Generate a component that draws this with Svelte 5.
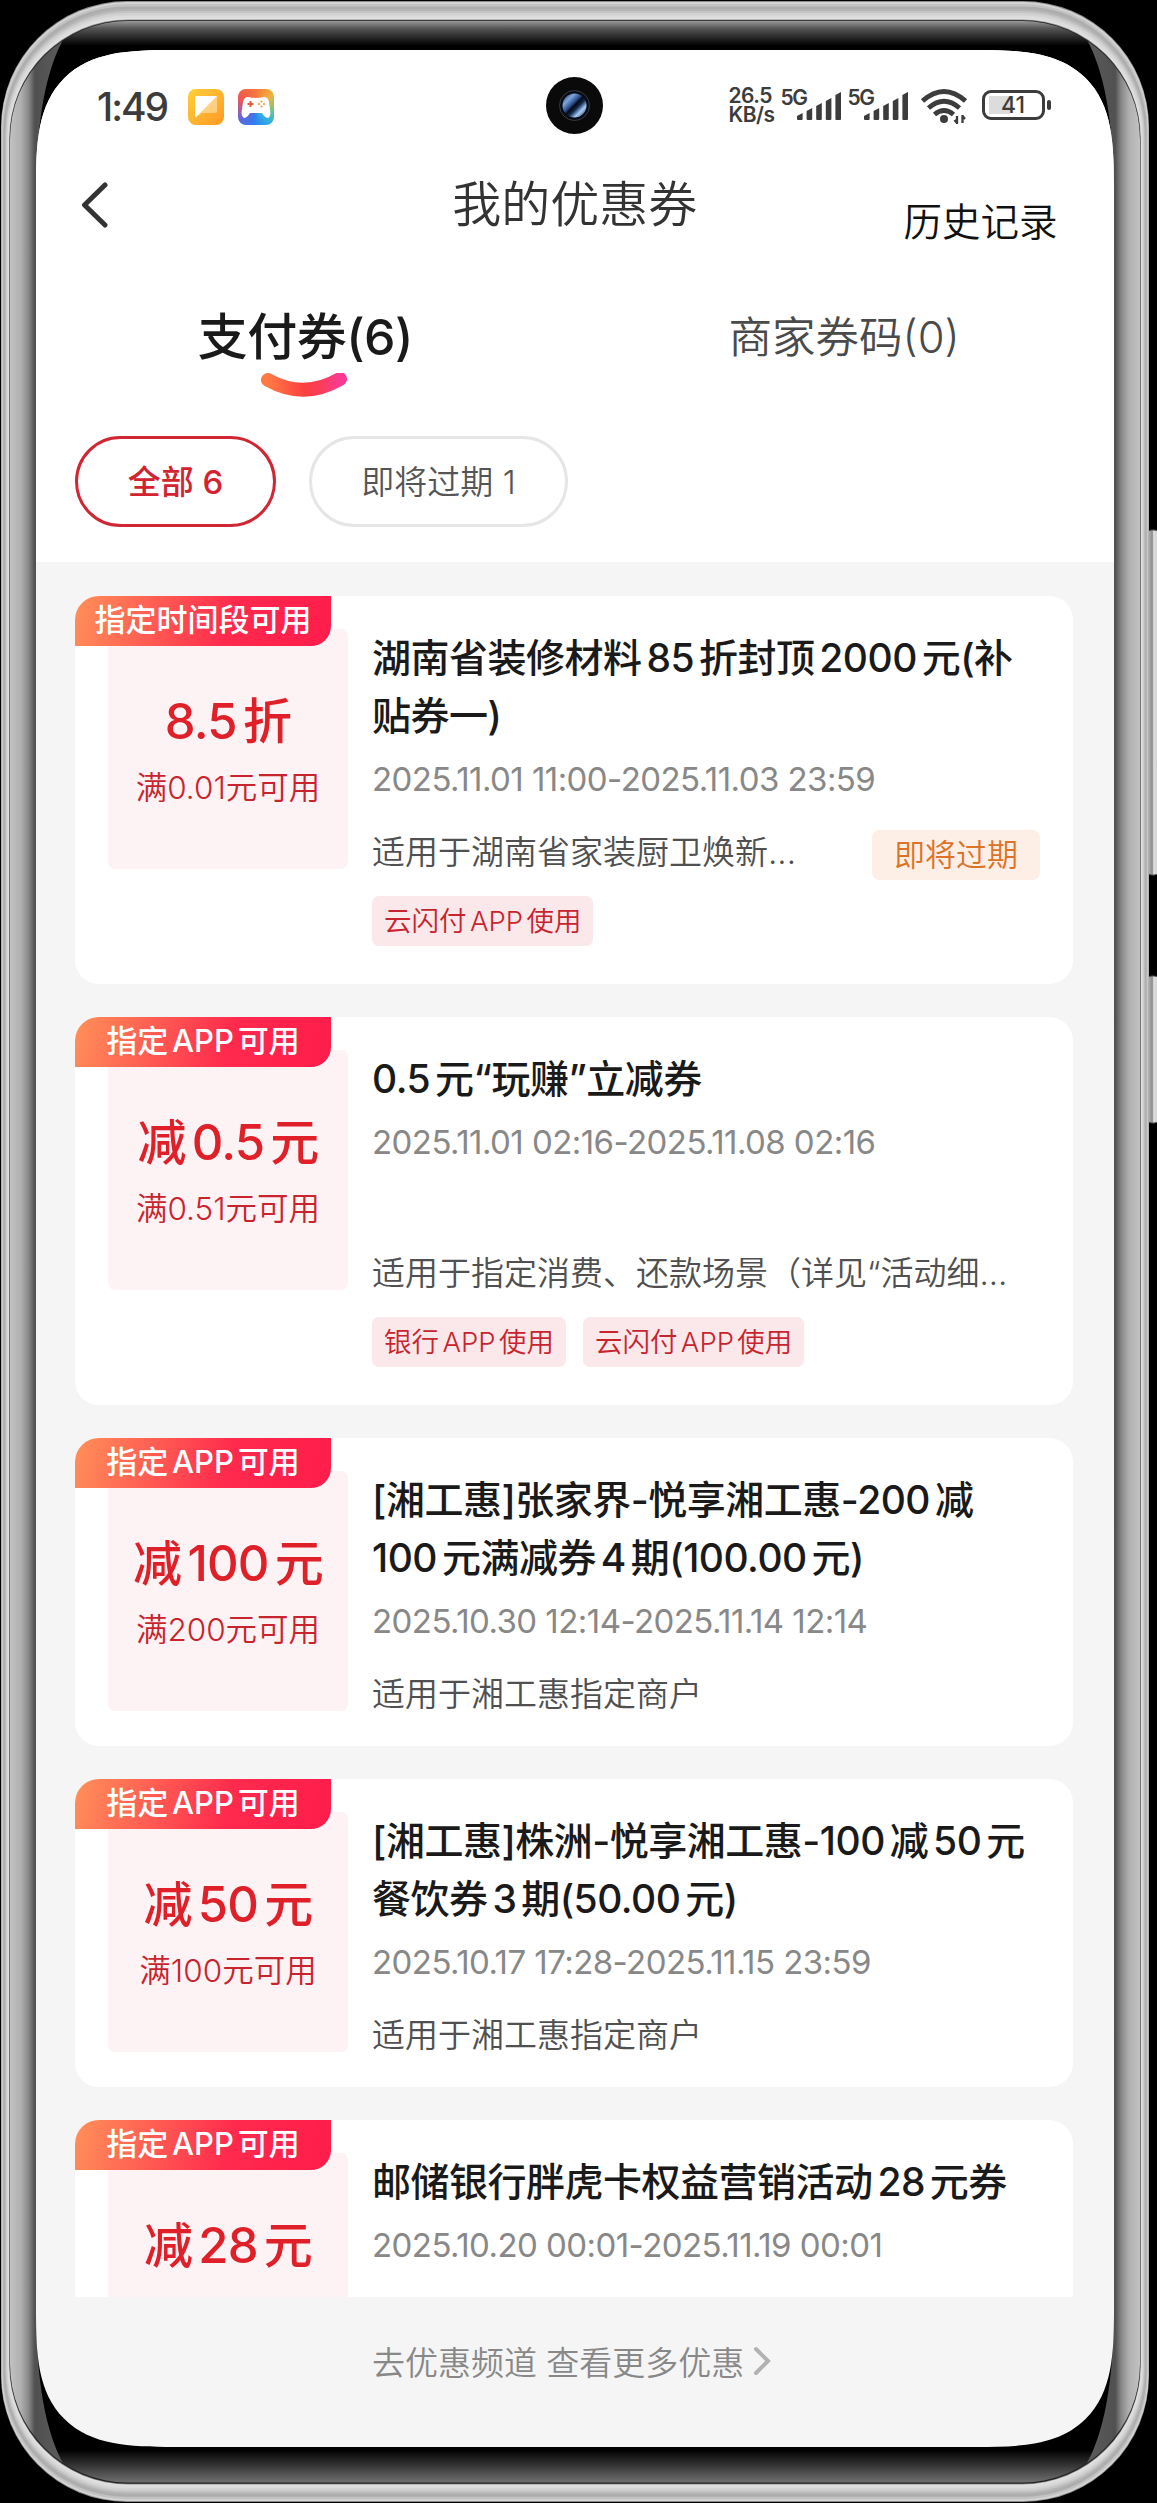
<script lang="ts">

	// Types

	interface Coupon {
		ribbon: string;
		amount: string;
		limit?: string;
		title: string[];
		date: string;
		scope?: string;
		expiring?: boolean;
		tags?: string[];
	}

	// Variables

	const coupons: Coupon[] = [
		{
			ribbon: "指定时间段可用",
			amount: "8.5折",
			limit: "满0.01元可用",
			title: ["湖南省装修材料85折封顶2000元(补", "贴券一)"],
			date: "2025.11.01 11:00-2025.11.03 23:59",
			scope: "适用于湖南省家装厨卫焕新...",
			expiring: true,
			tags: ["云闪付APP使用"]
		},
		{
			ribbon: "指定APP可用",
			amount: "减0.5元",
			limit: "满0.51元可用",
			title: ["0.5元“玩赚”立减券"],
			date: "2025.11.01 02:16-2025.11.08 02:16",
			scope: "适用于指定消费、还款场景（详见“活动细...",
			tags: ["银行APP使用", "云闪付APP使用"]
		},
		{
			ribbon: "指定APP可用",
			amount: "减100元",
			limit: "满200元可用",
			title: ["[湘工惠]张家界-悦享湘工惠-200减", "100元满减券4期(100.00元)"],
			date: "2025.10.30 12:14-2025.11.14 12:14",
			scope: "适用于湘工惠指定商户"
		},
		{
			ribbon: "指定APP可用",
			amount: "减50元",
			limit: "满100元可用",
			title: ["[湘工惠]株洲-悦享湘工惠-100减50元", "餐饮券3期(50.00元)"],
			date: "2025.10.17 17:28-2025.11.15 23:59",
			scope: "适用于湘工惠指定商户"
		},
		{
			ribbon: "指定APP可用",
			amount: "减28元",
			title: ["邮储银行胖虎卡权益营销活动28元券"],
			date: "2025.10.20 00:01-2025.11.19 00:01"
		}
	];

	// Metal rim, from the outer edge to the glass: position 0..1 and shade

	const rim: [number, string][] = [
		[0, "#8c8c8c"], [.05, "#d4d4d4"], [.15, "#c2c2c2"], [.27, "#adadad"],
		[.4, "#b4b4b4"], [.5, "#c4c4c4"], [.6, "#d2d2d2"], [.72, "#dcdcdc"],
		[.85, "#e2e2e2"], [.92, "#8a8a8a"], [.96, "#222"]
	];

	const signalBars: number[] = [7, 12, 17, 22, 28];

</script>

{#snippet signal()}
	<div class="signal">
		<span>5G</span>
		<svg width="44" height="28" viewBox="0 0 44 28" fill="#3c3c3c">
			{#each signalBars as bar, i}
				<path d="M{i * 9.6} {28 - bar + 3}l5.6-3v{bar - 1}q0 1-1 1h-3.6q-1 0-1-1z" />
			{/each}
		</svg>
	</div>
{/snippet}

<div class="phone">

	<svg class="frame" width="1157" height="2503" viewBox="0 0 1157 2503">
		<defs>
			<linearGradient id="side" gradientUnits="userSpaceOnUse" x1="10" y1="0" x2="64" y2="0">
				<stop offset="0" stop-color="#c2c2c2" />
				<stop offset=".2" stop-color="#b0b0b0" />
				<stop offset=".35" stop-color="#868686" />
				<stop offset=".46" stop-color="#505050" />
				<stop offset="1" stop-color="#5c5c5c" />
			</linearGradient>
			<linearGradient id="glass" gradientUnits="userSpaceOnUse" x1="0" y1="21" x2="0" y2="2482">
				<stop offset="0" stop-color="#999" />
				<stop offset=".003" stop-color="#555" />
				<stop offset=".01" stop-color="#000" />
				<stop offset=".987" stop-color="#000" />
				<stop offset="1" stop-color="#6e6e6e" />
			</linearGradient>
			<linearGradient id="key">
				<stop offset="0" stop-color="#777" />
				<stop offset=".25" stop-color="#a8a8a8" />
				<stop offset=".45" stop-color="#8c8c8c" />
				<stop offset=".55" stop-color="#e0e0e0" />
				<stop offset="1" stop-color="#c6c6c6" />
			</linearGradient>
			<clipPath id="inner">
				<rect x="10" y="21" width="1130" height="2461.500" rx="118" ry="118" />
			</clipPath>
		</defs>
		<rect x="1146" y="530" width="14" height="345" rx="6" fill="url(#key)" stroke="#555" />
		<rect x="1146" y="976" width="14" height="147" rx="6" fill="url(#key)" stroke="#555" />
		{#each rim as [t, shade]}
			<rect x={1 + 9 * t} y={1 + 20 * t} width={1148 - 18 * t} height={2501 - 39 * t} rx={126 - 8 * t} fill={shade} />
		{/each}
		<g clip-path="url(#inner)">
			<rect width="1157" height="2503" fill="url(#glass)" />
			<path d="M10 30L64 38C46 70 36 120 36 200V2303C36 2383 46 2433 64 2465L10 2475z" fill="url(#side)" />
			<path transform="matrix(-1 0 0 1 1150 0)" d="M10 30L64 38C46 70 36 120 36 200V2303C36 2383 46 2433 64 2465L10 2475z" fill="url(#side)" />
		</g>
	</svg>

	<main class="screen">

		<div class="status">
			<div class="group">
				<span class="time">1:49</span>
				<svg class="app" width="36" height="36" viewBox="0 0 36 36">
					<defs>
						<linearGradient id="note" x2="1" y2="1">
							<stop offset="0" stop-color="#ffcf3a" />
							<stop offset="1" stop-color="#ff9a24" />
						</linearGradient>
					</defs>
					<rect width="36" height="36" rx="8" fill="url(#note)" />
					<path d="M7 7h22v15q0 2-2 2H14l-7 5z" fill="#fff" opacity=".4" />
					<path d="M7 7h22L7 29z" fill="#fff" />
				</svg>
				<svg class="app game" width="36" height="36" viewBox="0 0 36 36">
					<path d="M10 8Q18 10 26 8Q30 8 31 13L32.500 24Q32 29 29 29Q26 28 24 24H12Q10 28 7 29Q4 29 3.500 24L5 13Q6 8 10 8z" fill="#fff" />
					<path d="M12.500 12v6M9.500 15h6" stroke="#f0593c" stroke-width="2" />
					<g fill="#f39a2f"><circle cx="23.500" cy="12.500" r="1.100" /><circle cx="23.500" cy="17.500" r="1.100" /><circle cx="21" cy="15" r="1.100" /><circle cx="26" cy="15" r="1.100" /></g>
				</svg>
			</div>
			<svg class="camera" width="57" height="57" viewBox="0 0 57 57">
				<defs>
					<linearGradient id="lens" x2="1" y2="1">
						<stop offset="0" stop-color="#0d1c33" />
						<stop offset=".25" stop-color="#7fa6dc" />
						<stop offset=".42" stop-color="#2c4f8c" />
						<stop offset=".5" stop-color="#050a14" />
						<stop offset=".6" stop-color="#12294f" />
						<stop offset=".75" stop-color="#a5cdf8" />
						<stop offset="1" stop-color="#0d1c33" />
					</linearGradient>
				</defs>
				<circle cx="28.500" cy="28.500" r="28.500" fill="#0a0a0b" />
				<circle cx="28.500" cy="28.500" r="15" fill="#080b11" stroke="#353d48" />
				<circle cx="28.500" cy="28.500" r="12" fill="url(#lens)" />
			</svg>
			<div class="group right">
				<div class="speed"><span>26.5</span><span>KB/s</span></div>
				{@render signal()}
				{@render signal()}
				<svg class="wifi" width="46" height="36" viewBox="0 0 46 36" fill="none" stroke="#3c3c3c" stroke-width="4.800">
					<path d="M1.500 12Q23-7 44.500 12M7.500 19Q23 5.500 38.500 19M13.500 25.500Q23 17.500 32.500 25.500" />
					<circle cx="23" cy="30" r="4" fill="#3c3c3c" stroke="none" />
					<path d="M36 27v8M41.500 26v8M33.500 31l2.500 3M44 30l-2.500-3" stroke-width="2.300" />
				</svg>
				<div class="battery"><span>41</span></div>
			</div>
		</div>

		<header>
			<svg class="back" width="28" height="48" viewBox="0 0 28 48" fill="none" stroke="#333" stroke-width="5" stroke-linecap="round" stroke-linejoin="round">
				<path d="M24 4L3.500 24L24 44" />
			</svg>
			<h1>我的优惠券</h1>
			<span class="history">历史记录</span>
		</header>

		<nav>
			<div class="tab active">
				支付券(6)
				<svg width="88" height="28" viewBox="0 0 88 28">
					<defs>
						<linearGradient id="smile">
							<stop offset="0" stop-color="#ff7a45" />
							<stop offset=".5" stop-color="#fb4040" />
							<stop offset=".75" stop-color="#fb3d5c" />
							<stop offset="1" stop-color="#f93a94" />
						</linearGradient>
					</defs>
					<path d="M7 7Q43 27 79 6" fill="none" stroke="url(#smile)" stroke-width="14" stroke-linecap="round" />
				</svg>
			</div>
			<div class="tab">商家券码(0)</div>
		</nav>

		<div class="filters">
			<button class="selected">全部 6</button>
			<button>即将过期 1</button>
		</div>

		<section class="list">
			{#each coupons as coupon}
				<article>
					<div class="ribbon">{coupon.ribbon}</div>
					<div class="value">
						<strong>{coupon.amount}</strong>
						{#if coupon.limit}<span>{coupon.limit}</span>{/if}
					</div>
					<div class="info">
						<div class="head">
							<h2>{#each coupon.title as line}<span>{line}</span>{/each}</h2>
							<time>{coupon.date}</time>
						</div>
						{#if coupon.scope}
							<div class="scope">
								<p>{coupon.scope}</p>
								{#if coupon.expiring}<span class="expiring">即将过期</span>{/if}
							</div>
						{/if}
						{#if coupon.tags}
							<div class="tags">
								{#each coupon.tags as tag}<span>{tag}</span>{/each}
							</div>
						{/if}
					</div>
				</article>
			{/each}
		</section>

		<footer>
			<span>去优惠频道 查看更多优惠</span>
			<svg width="18" height="30" viewBox="0 0 18 30" fill="none" stroke="#b2b2b2" stroke-width="4" stroke-linecap="round">
				<path d="M3 3L15 15L3 27" />
			</svg>
		</footer>

	</main>

</div>

<style>

	:global(body){
		background: #000;
	}

	.phone{
		position: relative;
		box-sizing: border-box;
		width: 1157px;
		height: 2503px;
		padding: 50px 0 0 36px;
		overflow: hidden;
		background: #000;
		font-family: Inter, "Noto Sans CJK SC", sans-serif;
		white-space: nowrap;
	}

	.frame{
		position: absolute;
		left: 0;
		top: 0;
	}

	.screen{
		position: relative;
		display: flex;
		flex-direction: column;
		width: 1077.5px;
		height: 2397px;
		border-radius: 96px;
		overflow: hidden;
		background: #f5f5f5;
	}

	@supports (corner-shape: superellipse(1.6)){
		.screen{
			border-radius: 138px;
			corner-shape: superellipse(1.6);
		}
	}

	/* Status bar */

	.status{
		display: flex;
		align-items: center;
		justify-content: space-between;
		height: 110px;
		padding: 0 69px 0 61px;
		background: #fff;
		color: #3c3c3c;
	}

	.group{
		display: flex;
		align-items: center;
		width: 448px;
		padding-top: 3px;
	}

	.right{
		justify-content: flex-end;
		width: 441px;
	}

	.time{
		width: 91px;
		font-size: 39px;
		font-weight: 500;
		letter-spacing: -2px;
	}

	.app{
		margin-right: 14px;
	}

	.game{
		border-radius: 8px;
		background: conic-gradient(from 0deg at 50% 60%, #f5793c, #f2b13c 45deg, #6cc58c 90deg, #2fb0e0 130deg, #2f7df0 190deg, #5b68dd 240deg, #b35a9c 275deg, #f0584c 310deg, #f5793c);
	}

	.speed{
		display: flex;
		flex-direction: column;
		width: 52px;
		margin-top: -3px;
		font-size: 21px;
		font-weight: 600;
		line-height: 19px;
		letter-spacing: -.5px;
	}

	.signal{
		position: relative;
		width: 60px;
		height: 32px;
		margin-right: 7px;
	}

	.signal span{
		position: absolute;
		left: 0;
		top: -3px;
		font-size: 21px;
		font-weight: 600;
		line-height: 20px;
		letter-spacing: -1.5px;
	}

	.signal svg{
		display: block;
		margin: 1px 0 0 16px;
	}

	.wifi{
		margin-left: 6px;
	}

	.battery{
		position: relative;
		box-sizing: border-box;
		width: 63px;
		height: 30px;
		margin: -4px 0 0 15px;
		border: 3px solid #3c3c3c;
		border-radius: 9px;
		background: linear-gradient(#dcdcdc, #dcdcdc) 4px 3px / 21px 18px no-repeat;
		font-size: 23px;
		font-weight: 500;
		line-height: 24px;
		text-align: center;
	}

	.battery::after{
		content: "";
		position: absolute;
		right: -9px;
		top: 7px;
		width: 4px;
		height: 10px;
		border-radius: 2px;
		background: #3c3c3c;
	}

	/* Header */

	header{
		box-sizing: border-box;
		display: flex;
		align-items: flex-start;
		justify-content: space-between;
		height: 96px;
		padding: 10px 56px 0 45px;
		background: #fff;
	}

	.back{
		margin: 11px 137px 0 0;
	}

	h1{
		margin: 0;
		color: #333;
		font-size: 49px;
		font-weight: 350;
		line-height: 70px;
	}

	.history{
		margin-top: 17px;
		color: #111;
		font-size: 38.5px;
		font-weight: 350;
		line-height: 70px;
	}

	/* Tabs */

	nav{
		display: flex;
		height: 135px;
		padding-top: 45px;
		background: #fff;
	}

	.tab{
		display: flex;
		flex-direction: column;
		align-items: center;
		flex: 1;
		color: #4a4a4a;
		font-size: 43.5px;
		font-weight: 350;
		line-height: 73px;
	}

	.tab.active{
		color: #1a1a1a;
		font-size: 50px;
		font-weight: 500;
		line-height: 72px;
		letter-spacing: -.5px;
	}

	/* Filters */

	.filters{
		display: flex;
		gap: 33px;
		height: 126px;
		padding-left: 39px;
		background: #fff;
	}

	.filters button{
		box-sizing: border-box;
		width: 259px;
		height: 91px;
		padding: 0 0 3px;
		border: 3px solid #e6e6e6;
		border-radius: 46px;
		background: #fff;
		color: #555;
		font: 350 33px Inter, "Noto Sans CJK SC", sans-serif;
	}

	.filters button.selected{
		width: 201px;
		border-color: #cf2733;
		color: #d2232f;
		font-weight: 500;
	}

	/* Coupons */

	.list{
		display: flex;
		flex-direction: column;
		gap: 33px;
		height: 1701px;
		padding: 34px 40.5px 0 39px;
		overflow: hidden;
	}

	article{
		position: relative;
		display: flex;
		flex-shrink: 0;
		gap: 24px;
		padding-left: 33px;
		border-radius: 24px;
		background: #fff;
	}

	.ribbon{
		position: absolute;
		left: 0;
		top: 0;
		width: 256px;
		height: 50px;
		border-radius: 24px 0 20px 0;
		background: linear-gradient(105deg, #ff9159, #ff2a4d 60%, #ff1c4b);
		color: #fff;
		font-size: 31px;
		font-weight: 500;
		line-height: 48px;
		text-align: center;
		text-autospace: normal;
	}

	.value{
		display: flex;
		flex-direction: column;
		align-items: center;
		box-sizing: border-box;
		width: 240px;
		height: 240px;
		padding-top: 57px;
		margin: 33px 0 0;
		border-radius: 7px;
		background: #fdf2f4;
		color: #df2029;
	}

	.value strong{
		font-size: 49px;
		font-weight: 500;
		line-height: 72px;
		letter-spacing: -.8px;
		text-autospace: normal;
	}

	.value span{
		color: #c8242e;
		font-size: 31.5px;
		font-weight: 350;
		line-height: 60px;
	}

	.info{
		flex: 1;
		padding: 33px 33px 27px 0;
	}

	.head{
		height: 198px;
	}

	h2{
		margin: 0 0 10px;
		color: #1a1a1a;
		font-size: 39px;
		font-weight: 500;
		line-height: 58px;
		letter-spacing: -.5px;
		text-autospace: normal;
	}

	h2 span{
		display: block;
	}

	time{
		display: block;
		color: #888;
		font-size: 33px;
		font-weight: 400;
		line-height: 48px;
		letter-spacing: -.55px;
	}

	.scope{
		display: flex;
		justify-content: space-between;
		height: 50px;
	}

	.scope p{
		margin: 0;
		color: #505050;
		font-size: 33px;
		font-weight: 350;
		line-height: 50px;
	}

	.expiring{
		width: 168px;
		height: 50px;
		margin-top: 3px;
		border-radius: 7px;
		background: #fdefe6;
		color: #dd7327;
		font-size: 31px;
		font-weight: 350;
		line-height: 49px;
		text-align: center;
	}

	.tags{
		display: flex;
		gap: 17px;
		padding: 19px 0 11px;
	}

	.tags span{
		height: 50px;
		padding: 0 12px;
		border-radius: 7px;
		background: #fbe8ea;
		color: #c8242e;
		font-size: 27.5px;
		font-weight: 350;
		line-height: 50px;
		text-autospace: normal;
	}

	/* Footer */

	footer{
		display: flex;
		align-items: center;
		gap: 9px;
		height: 127px;
		padding-left: 336px;
		color: #888;
		font-size: 33px;
		font-weight: 350;
	}

</style>
